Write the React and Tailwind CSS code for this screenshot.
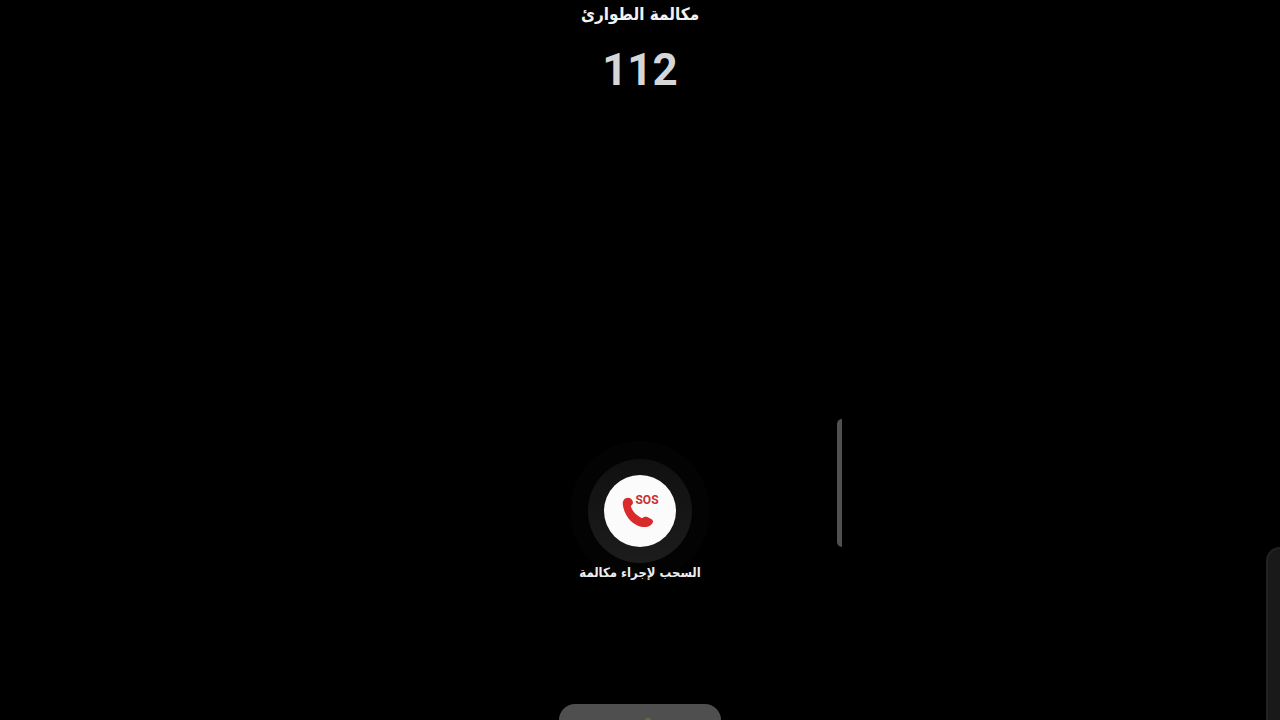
const ARABIC = "font-['DejaVu_Sans_Condensed','DejaVu_Sans',sans-serif]";

function SosIcon() {
    return (
        <svg viewBox="0 0 72 72" className="w-full h-full" aria-hidden="true">
            <path
                d="M18.8 29.5C18.4 25.4 20.8 22.9 23.8 22.8C26.6 22.8 28.4 24.6 28.9 26.9C29.3 28.9 28 29.9 26.8 31C28 35.8 32 40.2 37.8 43.2C39.5 41.9 41.2 41.2 43.3 42L47.2 44C49.6 45.3 49.4 47.2 47.9 48.9C45.4 51.6 42 52.4 38.4 52C28.6 50.6 20 40.6 18.8 29.5Z"
                fill="#d92b2b"
            />
            <text x="43" y="29" textAnchor="middle" fill="#c9302e" className="font-[Roboto,sans-serif] text-[12px] font-bold">
                SOS
            </text>
        </svg>
    );
}

function CallSlider() {
    return (
        <div className="flex flex-col items-center">
            <div className="rounded-full bg-[#030303] p-[18px]">
                <div className="rounded-full bg-linear-to-b from-[#101010] to-[#1c1c1c] p-4">
                    <button type="button" aria-label="SOS" className="block size-[72px] rounded-full bg-[#fbfbfb]">
                        <SosIcon />
                    </button>
                </div>
            </div>
            <p dir="rtl" className={`-mt-5 text-[13px] leading-6 font-bold text-[#ececec] ${ARABIC}`}>
                السحب لإجراء مكالمة
            </p>
        </div>
    );
}

function App() {
    return (
        <main className="relative h-screen overflow-hidden bg-black">
            <div className="relative mx-auto flex h-full max-w-[404px] flex-col items-center">
                <h1 dir="rtl" className={`text-[17px] leading-7 font-bold text-[#f2f2f2] ${ARABIC}`}>
                    مكالمة الطوارئ
                </h1>
                <p className="mt-4 text-[44px] leading-[52px] font-bold text-[#d6d6d8] font-[Roboto,sans-serif]">112</p>

                <div className="mt-auto mb-[119px]">
                    <CallSlider />
                </div>
                <button type="button" aria-label="إنهاء" className="flex h-4 w-[162px] shrink-0 items-end justify-center overflow-hidden rounded-t-[22px] bg-[#4f4f50]">
                    <span className="ml-4 h-0.5 w-1.5 rounded-t-full bg-[#6b6347]" />
                </button>

                <div className="absolute right-0 bottom-[173px] h-32 w-[5px] rounded-l-[5px] bg-[#505050]" />
            </div>

            <div className="absolute right-0 bottom-0 h-[173px] w-[14px] rounded-tl-[14px] border-t-2 border-l-2 border-[#222] bg-[#191919]" />
        </main>
    );
}

export default App;
